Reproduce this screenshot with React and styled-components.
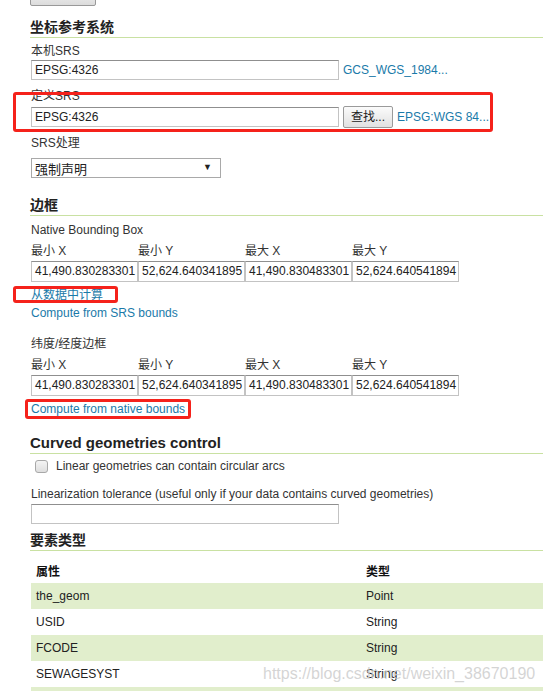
import React from 'react'
import styled, { createGlobalStyle } from 'styled-components'

const GlobalStyle = createGlobalStyle`
  html, body {
    margin: 0;
    padding: 0;
    background: #fff;
    overflow: hidden;
  }
  body {
    font-family: "Liberation Sans", "Noto Sans CJK SC", sans-serif;
    font-size: 12px;
    color: #333;
  }
`

const Page = styled.div`
  position: relative;
  width: 543px;
  height: 691px;
  overflow: hidden;
  padding-left: 31px;
  box-sizing: border-box;
`

const TopButton = styled.div`
  margin-top: -16px;
  margin-left: -1px;
  width: 66px;
  height: 22px;
  box-sizing: border-box;
  border: 1px solid #999;
  border-radius: 2px;
  background: linear-gradient(#fafafa, #dcdcdc);
  font-size: 12px;
  line-height: 20px;
  text-align: center;
  color: #222;
`

const Heading = styled.h3`
  margin: ${p => p.$mt}px 0 0 -1px;
  height: 18px;
  line-height: 18px;
  padding-bottom: 1px;
  border-bottom: 1px solid #c9e1a2;
  font-size: ${p => (p.$en ? 15 : 14)}px;
  font-weight: bold;
  color: #222;
`

const Label = styled.div`
  margin-top: ${p => p.$mt}px;
  height: 16px;
  line-height: 16px;
  font-size: 12px;
  color: #333;
`

const Row = styled.div`
  margin-top: ${p => p.$mt}px;
  display: flex;
  align-items: center;
  gap: 4px;
`

const TextInput = styled.div`
  width: ${p => p.$w}px;
  height: ${p => p.$h || 20}px;
  box-sizing: border-box;
  border: 1px solid #c3c3c3;
  border-top-color: #8f8f8f;
  background: #fff;
  padding-left: 3px;
  font-size: 12px;
  line-height: ${p => (p.$h || 20) - 2}px;
  color: #222;
  white-space: nowrap;
  overflow: hidden;
`

const Link = styled.div`
  margin-top: ${p => p.$mt || 0}px;
  height: 16px;
  line-height: 16px;
  font-size: 12px;
  color: #1a7aa9;
  white-space: nowrap;
`

const FindButton = styled.div`
  height: 22px;
  box-sizing: border-box;
  padding: 0 7px;
  border: 1px solid #9a9a9a;
  border-radius: 2px;
  background: linear-gradient(#fbfbfb, #e1e1e1);
  font-size: 12px;
  line-height: 20px;
  color: #222;
`

const SelectBox = styled.div`
  margin-top: 7px;
  width: 190px;
  height: 20px;
  box-sizing: border-box;
  border: 1px solid #a9a9a9;
  padding: 0 8px 0 3px;
  display: flex;
  justify-content: space-between;
  align-items: center;
  font-size: 13px;
  color: #222;

  span:last-child {
    font-size: 9px;
    margin-bottom: 3px;
  }
`

// red annotation frame drawn over the wrapped content
const Marked = styled.div`
  position: relative;

  &::after {
    content: '';
    position: absolute;
    top: ${p => p.$top}px;
    left: ${p => p.$left}px;
    width: ${p => p.$w}px;
    height: ${p => p.$h}px;
    border: 3px solid #f5221b;
    border-radius: 3px;
    box-sizing: border-box;
    pointer-events: none;
  }
`

const BoxGrid = styled.div`
  margin-top: ${p => p.$mt}px;
  display: grid;
  grid-template-columns: repeat(4, 107px);
  width: 428px;
`

const GridLabel = styled.div`
  height: 16px;
  line-height: 16px;
  font-size: 12px;
  color: #333;
`

const CheckRow = styled.label`
  margin-top: 4px;
  height: 16px;
  display: flex;
  align-items: center;
  gap: 8px;
  padding-left: 4px;
  font-size: 12px;
  color: #333;
`

const Check = styled.span`
  width: 13px;
  height: 13px;
  box-sizing: border-box;
  border: 1px solid #a8a8a8;
  border-radius: 3px;
  background: linear-gradient(#f4f4f4, #dedede);
`

const Table = styled.div`
  margin-top: 6px;
  width: 512px;
`

const TableRow = styled.div`
  display: grid;
  grid-template-columns: 330px 1fr;
  height: 26px;
  align-items: center;
  padding-left: 5px;
  background: ${p => (p.$alt ? '#e1eecc' : '#fff')};
  font-size: 12px;
  color: ${p => (p.$head ? '#111' : '#222')};
  font-weight: ${p => (p.$head ? 'bold' : 'normal')};
`

const Watermark = styled.div`
  position: absolute;
  left: 263px;
  top: 664px;
  font-family: "Liberation Sans", sans-serif;
  font-size: 16px;
  line-height: 20px;
  color: rgba(205, 205, 205, 0.85);
  white-space: nowrap;
  pointer-events: none;
`

const bbox = ['41,490.830283301', '52,624.640341895', '41,490.830483301', '52,624.640541894']
const bboxLabels = ['最小 X', '最小 Y', '最大 X', '最大 Y']

const attrs = [
  ['the_geom', 'Point'],
  ['USID', 'String'],
  ['FCODE', 'String'],
  ['SEWAGESYST', 'String'],
  ['', ''],
]

const BoundsGrid = ({ mt }) => (
  <>
    <BoxGrid $mt={mt}>
      {bboxLabels.map(l => <GridLabel key={l}>{l}</GridLabel>)}
    </BoxGrid>
    <BoxGrid $mt={2}>
      {bbox.map((v, i) => <TextInput key={i} $w={107} $h={21}>{v}</TextInput>)}
    </BoxGrid>
  </>
)

const App = () => {
  return (
    <Page>
      <GlobalStyle />
      <TopButton>刷新链接</TopButton>

      <Heading $mt={12}>坐标参考系统</Heading>
      <Label $mt={5}>本机SRS</Label>
      <Row $mt={1}>
        <TextInput $w={308}>EPSG:4326</TextInput>
        <Link>GCS_WGS_1984...</Link>
      </Row>

      <Marked $top={4} $left={-18} $w={480} $h={40}>
        <Label $mt={8}>定义SRS</Label>
        <Row $mt={2}>
          <TextInput $w={308}>EPSG:4326</TextInput>
          <FindButton>查找...</FindButton>
          <Link>EPSG:WGS 84...</Link>
        </Row>
      </Marked>

      <Label $mt={7}>SRS处理</Label>
      <SelectBox>
        <span>强制声明</span>
        <span>▼</span>
      </SelectBox>

      <Heading $mt={18}>边框</Heading>
      <Label $mt={6}>Native Bounding Box</Label>
      <BoundsGrid mt={5} />
      <Marked $top={-1} $left={-18} $w={105} $h={17}>
        <Link $mt={5}>从数据中计算</Link>
      </Marked>
      <Link $mt={2}>Compute from SRS bounds</Link>

      <Label $mt={15}>纬度/经度边框</Label>
      <BoundsGrid mt={5} />
      <Marked $top={-2} $left={-6} $w={166} $h={20}>
        <Link $mt={5}>Compute from native bounds</Link>
      </Marked>

      <Heading $mt={17} $en>Curved geometries control</Heading>
      <CheckRow>
        <Check />
        Linear geometries can contain circular arcs
      </CheckRow>
      <Label $mt={12}>Linearization tolerance (useful only if your data contains curved geometries)</Label>
      <Row $mt={2}>
        <TextInput $w={308} />
      </Row>

      <Heading $mt={7}>要素类型</Heading>
      <Table>
        <TableRow $head>
          <span>属性</span>
          <span>类型</span>
        </TableRow>
        {attrs.map(([name, type], i) => (
          <TableRow key={i} $alt={i % 2 === 0}>
            <span>{name}</span>
            <span>{type}</span>
          </TableRow>
        ))}
      </Table>

      <Watermark>https://blog.csdn.net/weixin_38670190</Watermark>
    </Page>
  )
}

export default App
